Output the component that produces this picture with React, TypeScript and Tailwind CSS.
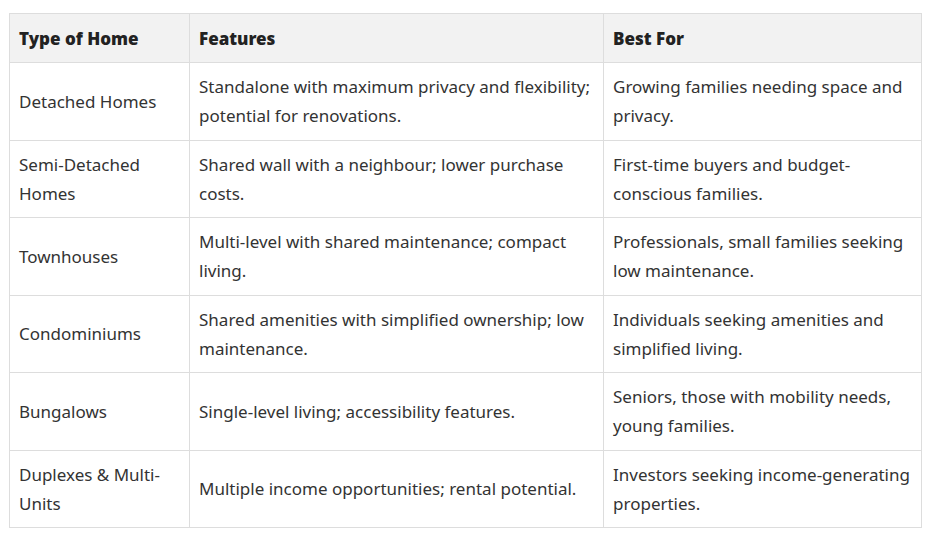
import React from "react";

const ROWS: [string, string, string][] = [
  ["Detached Homes", "Standalone with maximum privacy and flexibility; potential for renovations.", "Growing families needing space and privacy."],
  ["Semi-Detached Homes", "Shared wall with a neighbour; lower purchase costs.", "First-time buyers and budget-conscious families."],
  ["Townhouses", "Multi-level with shared maintenance; compact living.", "Professionals, small families seeking low maintenance."],
  ["Condominiums", "Shared amenities with simplified ownership; low maintenance.", "Individuals seeking amenities and simplified living."],
  ["Bungalows", "Single-level living; accessibility features.", "Seniors, those with mobility needs, young families."],
  ["Duplexes & Multi-Units", "Multiple income opportunities; rental potential.", "Investors seeking income-generating properties."],
];

export default function App() {
  return (
    <div className="min-h-[538px] bg-white pl-[9px] pt-[13px] font-['Noto_Sans',sans-serif] text-[#333]">
      <table className="w-[912px] table-fixed border-collapse text-[17px] leading-[29px]">
        <colgroup>
          <col className="w-[180px]" />
          <col className="w-[414px]" />
          <col className="w-[318px]" />
        </colgroup>
        <thead>
          <tr className="h-[49px] bg-[#f2f2f2]">
            {["Type of Home", "Features", "Best For"].map((h) => (
              <th key={h} className="border border-[#dddddd] pl-[9px] pr-[8px] text-left font-black text-[#222]">
                {h}
              </th>
            ))}
          </tr>
        </thead>
        <tbody>
          {ROWS.map((r) => (
            <tr key={r[0]} className="h-[77.5px]">
              {r.map((c, i) => (
                <td key={i} className="border border-[#dddddd] pl-[9px] pr-[8px] align-middle">
                  {c}
                </td>
              ))}
            </tr>
          ))}
        </tbody>
      </table>
    </div>
  );
}
